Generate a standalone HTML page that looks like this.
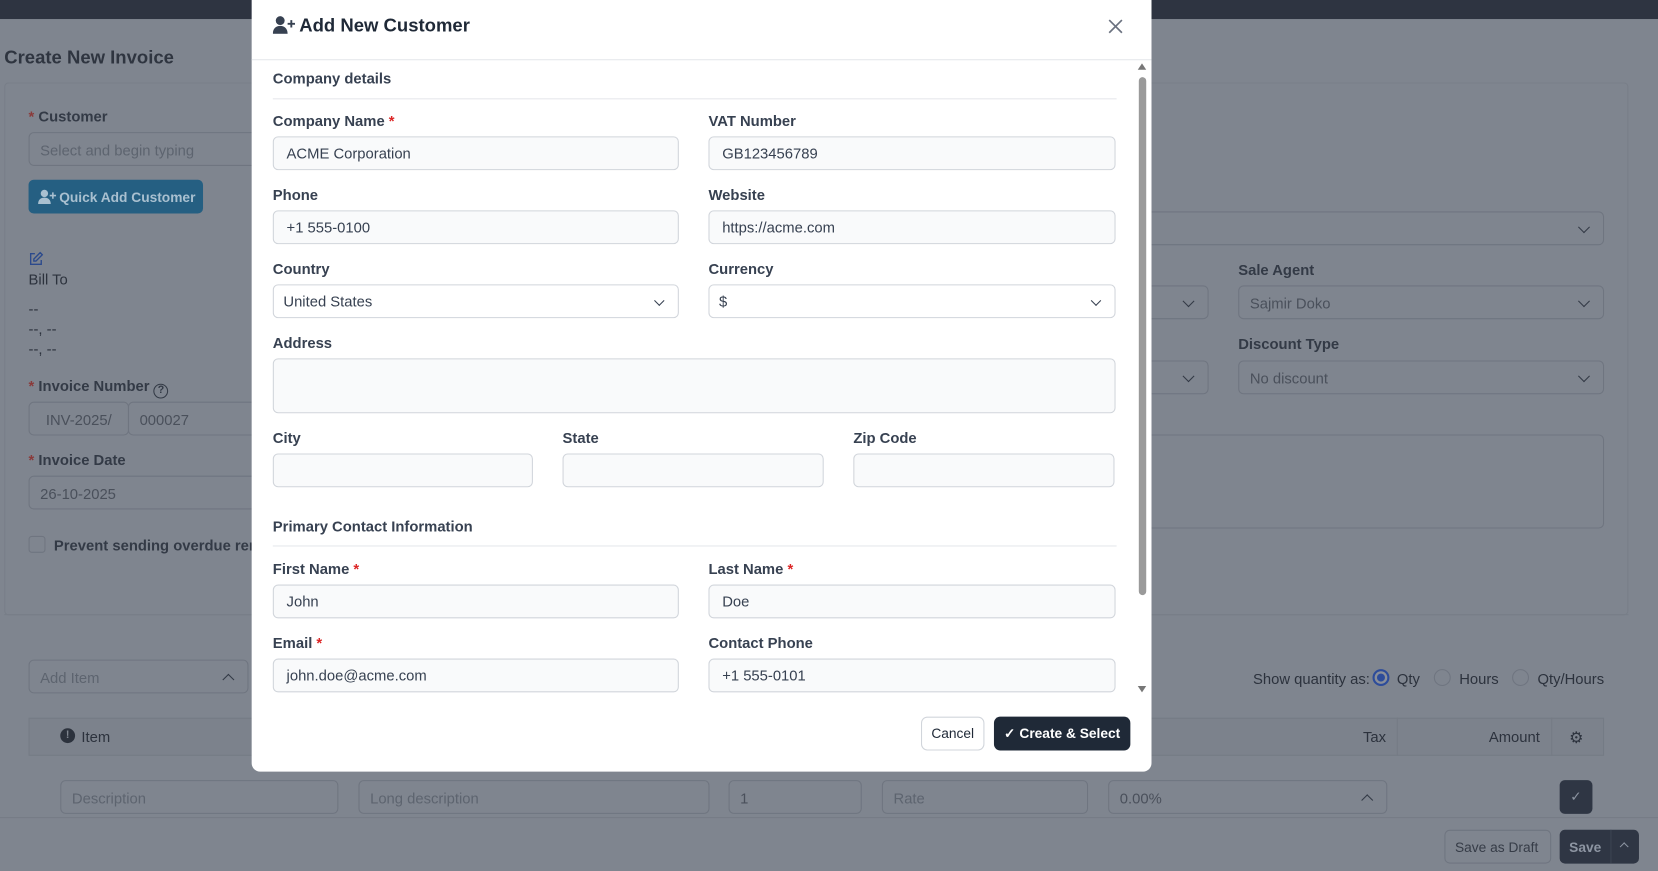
<!DOCTYPE html>
<html><head><meta charset="utf-8"><style>
*{box-sizing:border-box;margin:0;padding:0}
html,body{width:1658px;height:871px;overflow:hidden;background:#7f858f;font-family:"Liberation Sans",sans-serif}
#s{position:absolute;left:0;top:0;width:1568px;height:824px;transform:scale(1.05740,1.05704);transform-origin:0 0}
.a{position:absolute;white-space:nowrap}
.bt{color:#2c323d;font-size:14px}
.bl{color:#333a46;font-size:14px;font-weight:bold}
.bi{position:absolute;border:1px solid #6f7580;border-radius:5px;height:32px;color:#4a505b;font-size:14px;padding:8px 10px;white-space:nowrap}
.ph{color:#5d646f}
.chev{position:absolute;right:14px;top:10px;width:8px;height:8px;border-right:1.4px solid #333a46;border-bottom:1.4px solid #333a46;transform:rotate(45deg)}
.up{transform:rotate(-135deg);top:14px}
#m{position:absolute;left:238px;top:0;width:851px;height:730px;background:#fff;border-radius:0 0 8px 8px}
.l{position:absolute;font-size:14px;color:#374151;font-weight:bold}
.l b{color:#dc2626}
.i{position:absolute;height:32px;border:1px solid #d1d5db;border-radius:5px;background:#f9fafb;font-size:14px;color:#374151;padding:7px 12px;line-height:16px}
.mc{position:absolute;right:14px;top:11px;width:7px;height:7px;border-right:1.4px solid #374151;border-bottom:1.4px solid #374151;transform:rotate(45deg)}
</style></head><body><div id="s">
<div class="a" style="left:0;top:0;width:1568px;height:18px;background:#2e3441"></div>
<div class="a" style="left:4px;top:44px;font-size:17.5px;font-weight:bold;color:#2f3540">Create New Invoice</div>
<div class="a" style="left:4px;top:78px;width:1536px;height:504px;border:1px solid #787e88;border-radius:4px"></div>
<div class="a" style="left:4px;top:581px;width:1536px;height:1px;background:#787e88"></div>
<div class="a bl" style="left:27px;top:102px"><span style="color:#8a3a3a">* </span>Customer</div>
<div class="bi ph" style="left:27px;top:125px;width:230px">Select and begin typing</div>
<div class="a" style="left:27px;top:170px;width:165px;height:32px;background:#255f82;border-radius:5px;color:#a9c0d0;font-size:13px;font-weight:bold;padding:9px 0 0 29px">Quick Add Customer</div>
<svg class="a" style="left:36px;top:179px" width="18" height="14" viewBox="0 0 18 14"><circle cx="6" cy="4" r="3.5" fill="#a9c0d0"/><path d="M0 14c0-4 2.5-6 6-6s6 2 6 6z" fill="#a9c0d0"/><path d="M14 3v6M11 6h6" stroke="#a9c0d0" stroke-width="1.5"/></svg>
<svg class="a" style="left:27px;top:238px" width="14" height="14" viewBox="0 0 14 14" fill="none" stroke="#2c4a8c" stroke-width="1.3"><path d="M6 2H2v10h10V8"/><path d="M11 1l2 2-6 6H5V7z"/></svg>
<div class="a bt" style="left:27px;top:256px">Bill To</div>
<div class="a bt" style="left:27px;top:283px;line-height:19px">--<br>--, --<br>--, --</div>
<div class="a bl" style="left:27px;top:357px"><span style="color:#8a3a3a">* </span>Invoice Number <span style="display:inline-block;width:14px;height:14px;border:1.3px solid #333a46;border-radius:50%;font-size:10px;text-align:center;line-height:12px;vertical-align:-2px">?</span></div>
<div class="bi" style="left:27px;top:380px;width:95px;text-align:center">INV-2025/</div>
<div class="bi" style="left:121px;top:380px;width:130px">000027</div>
<div class="a bl" style="left:27px;top:427px"><span style="color:#8a3a3a">* </span>Invoice Date</div>
<div class="bi" style="left:27px;top:450px;width:230px">26-10-2025</div>
<div class="a" style="left:27px;top:507px;width:16px;height:16px;border:1px solid #6f7580;border-radius:3px"></div>
<div class="a bt" style="left:51px;top:508px;font-weight:bold;color:#333a46">Prevent sending overdue reminders</div>
<div class="bi" style="left:1080px;top:200px;width:437px"><i class="chev"></i></div>
<div class="bi" style="left:1080px;top:270px;width:63px"><i class="chev"></i></div>
<div class="a bl" style="left:1171px;top:247px">Sale Agent</div>
<div class="bi" style="left:1171px;top:270px;width:346px">Sajmir Doko<i class="chev"></i></div>
<div class="bi" style="left:1080px;top:341px;width:63px"><i class="chev"></i></div>
<div class="a bl" style="left:1171px;top:317px">Discount Type</div>
<div class="bi" style="left:1171px;top:341px;width:346px">No discount<i class="chev"></i></div>
<div class="bi" style="left:1080px;top:411px;width:437px;height:89px"></div>
<div class="bi ph" style="left:27px;top:624px;width:208px">Add Item<i class="chev up"></i></div>
<div class="a bl" style="left:1185px;top:634px;font-weight:normal;color:#2c323d">Show quantity as:</div>
<div class="a" style="left:1298px;top:633px;width:16px;height:16px;border-radius:50%;border:2px solid #2d4c9a;background:radial-gradient(#2d4c9a 3.5px,#8a8f99 4px)"></div>
<div class="a bt" style="left:1321px;top:634px">Qty</div>
<div class="a" style="left:1356px;top:633px;width:16px;height:16px;border-radius:50%;border:1px solid #6f7580"></div>
<div class="a bt" style="left:1380px;top:634px">Hours</div>
<div class="a" style="left:1430px;top:633px;width:16px;height:16px;border-radius:50%;border:1px solid #6f7580"></div>
<div class="a bt" style="left:1454px;top:634px">Qty/Hours</div>
<div class="a" style="left:27px;top:679px;width:1490px;height:36px;border:1px solid #757b85;background:#7c828c"></div>
<div class="a" style="left:57px;top:689px;width:14px;height:14px;border-radius:50%;background:#2c323d;color:#7f858f;font-size:10px;font-weight:bold;text-align:center;line-height:14px">!</div>
<div class="a bt" style="left:77px;top:689px">Item</div>
<div class="a bt" style="left:1289px;top:689px">Tax</div>
<div class="a" style="left:1321px;top:679px;width:1px;height:36px;background:#757b85"></div>
<div class="a bt" style="left:1408px;top:689px">Amount</div>
<div class="a" style="left:1467px;top:679px;width:1px;height:36px;background:#757b85"></div>
<div class="a" style="left:1484px;top:689px;color:#2c323d;font-size:15px">⚙</div>
<div class="bi ph" style="left:57px;top:738px;width:263px">Description</div>
<div class="bi ph" style="left:339px;top:738px;width:332px">Long description</div>
<div class="bi" style="left:689px;top:738px;width:126px">1</div>
<div class="bi ph" style="left:834px;top:738px;width:195px">Rate</div>
<div class="bi" style="left:1048px;top:738px;width:264px">0.00%<i class="chev up"></i></div>
<div class="a" style="left:1475px;top:738px;width:31px;height:32px;background:#2f3644;border-radius:5px;color:#8d95a2;text-align:center;line-height:32px;font-size:13px">✓</div>
<div class="a" style="left:0;top:773px;width:1568px;height:51px;background:#7f858f;border-top:1px solid #757b85"></div>
<div class="bi" style="left:1366px;top:785px;width:101px;height:32px;color:#363c47;font-size:13px;padding:8px 9px">Save as Draft</div>
<div class="a" style="left:1475px;top:785px;width:75px;height:32px;background:#2f3644;border-radius:5px;color:#8d95a2;font-size:13px;font-weight:bold;padding:9px 0 0 9px">Save<span style="position:absolute;left:48px;top:0;width:1px;height:32px;background:#3c4452"></span><i style="position:absolute;left:58px;top:13px;width:6px;height:6px;border-left:1px solid #8d95a2;border-top:1px solid #8d95a2;transform:rotate(45deg)"></i></div>

<div id="m">
<svg class="a" style="left:20px;top:15px" width="22" height="17" viewBox="0 0 22 17"><circle cx="7" cy="4.5" r="4.2" fill="#374151"/><path d="M0 17c0-5 3-7.5 7-7.5s7 2.5 7 7.5z" fill="#374151"/><path d="M17.5 4v7M14 7.5h7" stroke="#374151" stroke-width="1.8"/></svg>
<div class="a" style="left:45px;top:14px;font-size:17.5px;font-weight:bold;color:#1f2937">Add New Customer</div>
<svg class="a" style="left:810px;top:18px" width="14" height="14" viewBox="0 0 14 14" stroke="#6b7280" stroke-width="1.6"><path d="M1 1l12 12M13 1L1 13"/></svg>
<div class="a" style="left:0;top:56px;width:851px;height:1px;background:#e5e7eb"></div>
<div class="a" style="left:838px;top:60px;width:0;height:0;border:4px solid transparent;border-bottom:6px solid #777;border-top:0"></div>
<div class="a" style="left:839px;top:73px;width:7px;height:490px;background:#9a9a9a;border-radius:4px"></div>
<div class="a" style="left:838px;top:649px;width:0;height:0;border:4px solid transparent;border-top:6px solid #777;border-bottom:0"></div>
<div class="l" style="left:20px;top:66px">Company details</div>
<div class="a" style="left:20px;top:93px;width:798px;height:1px;background:#e5e7eb"></div>
<div class="l" style="left:20px;top:106px">Company Name <b>*</b></div>
<div class="i" style="left:20px;top:129px;width:384px">ACME Corporation</div>
<div class="l" style="left:432px;top:106px">VAT Number</div>
<div class="i" style="left:432px;top:129px;width:385px">GB123456789</div>
<div class="l" style="left:20px;top:176px">Phone</div>
<div class="i" style="left:20px;top:199px;width:384px">+1 555-0100</div>
<div class="l" style="left:432px;top:176px">Website</div>
<div class="i" style="left:432px;top:199px;width:385px">https://acme.com</div>
<div class="l" style="left:20px;top:246px">Country</div>
<div class="i" style="left:20px;top:269px;width:384px;padding-left:9px;background:#fff">United States<i class="mc"></i></div>
<div class="l" style="left:432px;top:246px">Currency</div>
<div class="i" style="left:432px;top:269px;width:385px;padding-left:9px;background:#fff">$<i class="mc"></i></div>
<div class="l" style="left:20px;top:316px">Address</div>
<div class="i" style="left:20px;top:339px;width:797px;height:52px"></div>
<div class="l" style="left:20px;top:406px">City</div>
<div class="i" style="left:20px;top:429px;width:246px"></div>
<div class="l" style="left:294px;top:406px">State</div>
<div class="i" style="left:294px;top:429px;width:247px"></div>
<div class="l" style="left:569px;top:406px">Zip Code</div>
<div class="i" style="left:569px;top:429px;width:247px"></div>
<div class="l" style="left:20px;top:490px">Primary Contact Information</div>
<div class="a" style="left:20px;top:516px;width:798px;height:1px;background:#e5e7eb"></div>
<div class="l" style="left:20px;top:530px">First Name <b>*</b></div>
<div class="i" style="left:20px;top:553px;width:384px">John</div>
<div class="l" style="left:432px;top:530px">Last Name <b>*</b></div>
<div class="i" style="left:432px;top:553px;width:385px">Doe</div>
<div class="l" style="left:20px;top:600px">Email <b>*</b></div>
<div class="i" style="left:20px;top:623px;width:384px">john.doe@acme.com</div>
<div class="l" style="left:432px;top:600px">Contact Phone</div>
<div class="i" style="left:432px;top:623px;width:385px">+1 555-0101</div>
<div class="a" style="left:633px;top:678px;width:60px;height:32px;border:1px solid #d1d5db;border-radius:6px;font-size:13px;color:#1f2937;text-align:center;line-height:30px">Cancel</div>
<div class="a" style="left:702px;top:678px;width:129px;height:32px;background:#1f2937;border-radius:6px;font-size:13px;font-weight:bold;color:#fff;text-align:center;line-height:32px">✓ Create &amp; Select</div>
</div>
</div></body></html>
